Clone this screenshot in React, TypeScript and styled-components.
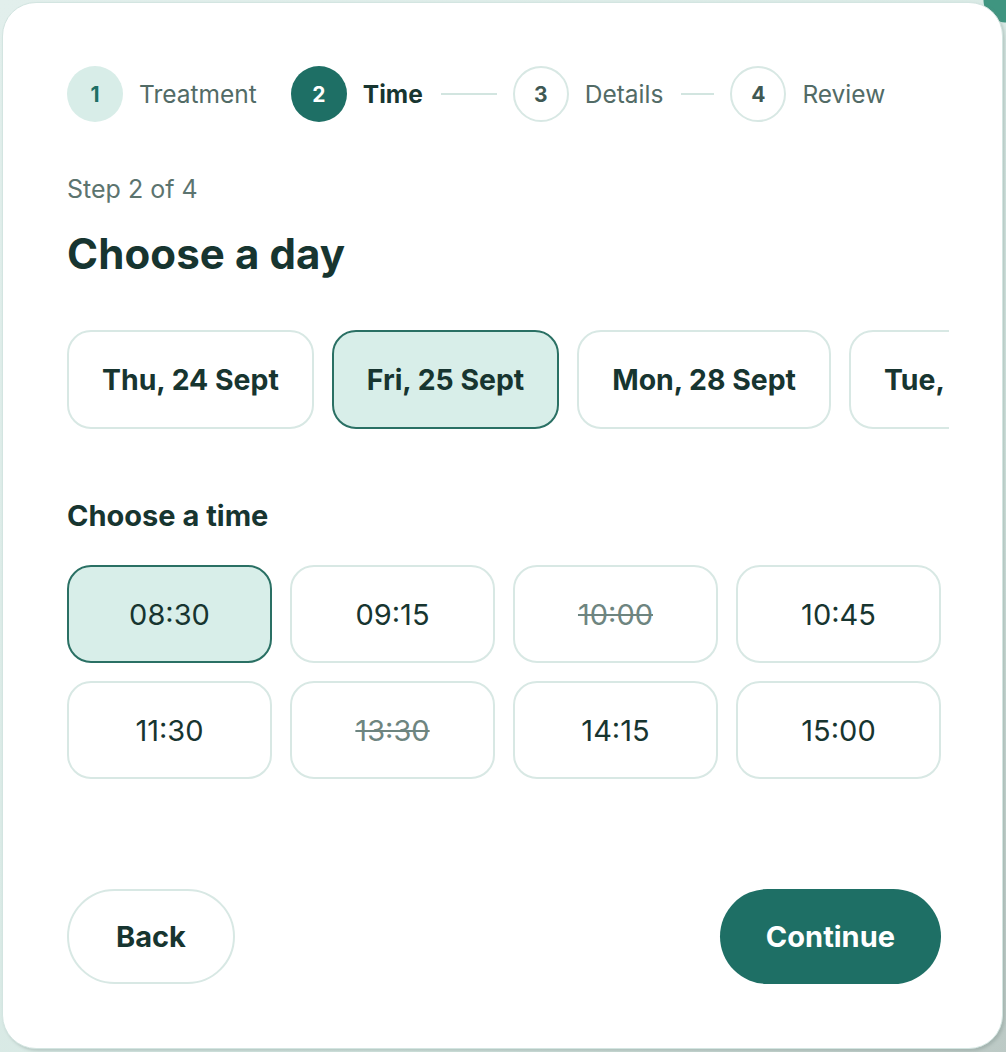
import React, { useState } from 'react';
import styled, { createGlobalStyle } from 'styled-components';

const GlobalStyle = createGlobalStyle`
  html, body {
    margin: 0;
    padding: 0;
  }
  body {
    width: 1006px;
    height: 1052px;
    overflow: hidden;
    background:
      radial-gradient(circle at 100% 0%, #3f9580 0, #3f9580 22px, transparent 23px),
      linear-gradient(135deg, #e2efec 0%, #d6e8e3 70%, #bcc9c5 100%);
    font-family: Inter, 'Noto Sans', sans-serif;
    color: #173530;
  }
`;

const Card = styled.div`
  box-sizing: border-box;
  margin: 2px 0 0 2px;
  width: 1001px;
  height: 1047px;
  background: #ffffff;
  border: 1px solid #d3e5e1;
  border-radius: 34px;
  box-shadow: 2px 2px 3px rgba(120, 140, 135, 0.35);
  padding: 63px 63px 0 64px;
  display: flex;
  flex-direction: column;
`;

// Stepper
const Stepper = styled.div`
  display: flex;
  align-items: center;
  height: 56px;
`;

const Step = styled.div`
  display: flex;
  align-items: center;
  gap: 16px;
`;

type StepState = 'done' | 'active' | 'todo';

const Bubble = styled.div<{ $state: StepState }>`
  box-sizing: border-box;
  width: 56px;
  height: 56px;
  border-radius: 50%;
  display: flex;
  align-items: center;
  justify-content: center;
  font-size: 21px;
  font-weight: 700;
  background: ${p => (p.$state === 'done' ? '#d8ede8' : p.$state === 'active' ? '#1e6f65' : '#ffffff')};
  color: ${p => (p.$state === 'done' ? '#1e6f65' : p.$state === 'active' ? '#ffffff' : '#3f5853')};
  border: ${p => (p.$state === 'todo' ? '2px solid #d8e8e4' : 'none')};
`;

const StepLabel = styled.span<{ $active?: boolean }>`
  font-size: 24.5px;
  font-weight: ${p => (p.$active ? 700 : 400)};
  color: ${p => (p.$active ? '#173530' : '#526b66')};
`;

const Connector = styled.div<{ $w: number }>`
  width: ${p => p.$w}px;
  height: 2px;
  background: #d2e5e0;
  margin: 0 16px 0 18px;
`;

const StepGap = styled.div`
  width: 34px;
`;

const Eyebrow = styled.div`
  margin-top: 52px;
  font-size: 25px;
  line-height: 30px;
  color: #5c746f;
`;

const Heading = styled.h1`
  margin: 25px 0 0;
  font-size: 42px;
  line-height: 50px;
  font-weight: 700;
  letter-spacing: 0.1px;
  color: #173530;
`;

const DayScroller = styled.div`
  margin-top: 51px;
  width: 882px;
  overflow: hidden;
  display: flex;
  gap: 18px;
`;

const Chip = styled.button<{ $selected?: boolean }>`
  flex: none;
  box-sizing: border-box;
  height: 99px;
  padding: 0 33px;
  border-radius: 24px;
  border: 2px solid ${p => (p.$selected ? '#2a7064' : '#d8e8e4')};
  background: ${p => (p.$selected ? '#d8eee9' : '#ffffff')};
  font-family: inherit;
  font-size: 28.4px;
  font-weight: 700;
  color: #173530;
  cursor: pointer;
`;

const SubHeading = styled.h2`
  margin: 70px 0 0;
  font-size: 29px;
  line-height: 34px;
  font-weight: 700;
  color: #173530;
`;

const TimeGrid = styled.div`
  margin-top: 32px;
  width: 874px;
  display: grid;
  grid-template-columns: repeat(4, 1fr);
  gap: 18px;
`;

const Slot = styled.button<{ $selected?: boolean; $taken?: boolean }>`
  box-sizing: border-box;
  height: 98px;
  border-radius: 24px;
  border: 2px solid ${p => (p.$selected ? '#2a7064' : '#d8e8e4')};
  background: ${p => (p.$selected ? '#d8eee9' : '#ffffff')};
  font-family: inherit;
  font-size: 29px;
  font-weight: 400;
  color: ${p => (p.$taken ? '#6e8580' : '#173530')};
  text-decoration: ${p => (p.$taken ? 'line-through' : 'none')};
  cursor: ${p => (p.$taken ? 'default' : 'pointer')};
`;

const Footer = styled.div`
  margin-top: 110px;
  width: 874px;
  display: flex;
  justify-content: space-between;
`;

const PillButton = styled.button<{ $primary?: boolean }>`
  box-sizing: border-box;
  height: 95px;
  padding: 0 ${p => (p.$primary ? 46 : 47)}px;
  border-radius: 48px;
  border: ${p => (p.$primary ? 'none' : '2px solid #d8e8e4')};
  background: ${p => (p.$primary ? '#1e6f65' : '#ffffff')};
  color: ${p => (p.$primary ? '#ffffff' : '#173530')};
  font-family: inherit;
  font-size: 29px;
  font-weight: 700;
  cursor: pointer;
`;

const days = ['Thu, 24 Sept', 'Fri, 25 Sept', 'Mon, 28 Sept', 'Tue, 29 Sept'];
const times = [
  { t: '08:30' },
  { t: '09:15' },
  { t: '10:00', taken: true },
  { t: '10:45' },
  { t: '11:30' },
  { t: '13:30', taken: true },
  { t: '14:15' },
  { t: '15:00' },
];

export default function App() {
  const [day, setDay] = useState(1);
  const [time, setTime] = useState('08:30');

  return (
    <>
      <GlobalStyle />
      <Card>
        <Stepper>
          <Step>
            <Bubble $state="done">1</Bubble>
            <StepLabel>Treatment</StepLabel>
          </Step>
          <StepGap />
          <Step>
            <Bubble $state="active">2</Bubble>
            <StepLabel $active>Time</StepLabel>
          </Step>
          <Connector $w={56} />
          <Step>
            <Bubble $state="todo">3</Bubble>
            <StepLabel>Details</StepLabel>
          </Step>
          <Connector $w={33} />
          <Step>
            <Bubble $state="todo">4</Bubble>
            <StepLabel>Review</StepLabel>
          </Step>
        </Stepper>

        <Eyebrow>Step 2 of 4</Eyebrow>
        <Heading>Choose a day</Heading>

        <DayScroller>
          {days.map((d, i) => (
            <Chip key={d} $selected={i === day} onClick={() => setDay(i)}>
              {d}
            </Chip>
          ))}
        </DayScroller>

        <SubHeading>Choose a time</SubHeading>
        <TimeGrid>
          {times.map(s => (
            <Slot
              key={s.t}
              $selected={s.t === time}
              $taken={s.taken}
              onClick={() => !s.taken && setTime(s.t)}
            >
              {s.t}
            </Slot>
          ))}
        </TimeGrid>

        <Footer>
          <PillButton>Back</PillButton>
          <PillButton $primary>Continue</PillButton>
        </Footer>
      </Card>
    </>
  );
}
